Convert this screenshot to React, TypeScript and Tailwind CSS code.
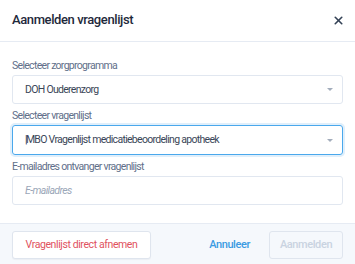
import { X } from "lucide-react";

function Caret() {
  return (
    <svg width="6" height="3" viewBox="0 0 6 3" className="shrink-0">
      <path d="M0 0 L6 0 L3 3 Z" fill="#a3adbc" />
    </svg>
  );
}

export default function App() {
  return (
    <div
      className="w-[355px] h-[264px] bg-white flex flex-col overflow-hidden"
      style={{ fontFamily: "Roboto, sans-serif" }}
    >
      {/* header */}
      <div className="h-[42px] shrink-0 flex items-center justify-between pl-3 pr-[10px] border-b border-[#e6ebf3]">
        <h2 className="text-[13px] font-medium text-[#1e293b] tracking-[-0.4px] -mt-[1px]">Aanmelden vragenlijst</h2>
        <X size={13} strokeWidth={3} className="text-[#334155]" />
      </div>

      {/* body */}
      <div className="flex-1 flex flex-col px-3 pt-[17px]">
        <label className="text-[10.5px] leading-[14px] tracking-[-0.7px] text-[#5f6f8a]">Selecteer zorgprogramma</label>
        <div className="mt-[2px] h-[29px] flex items-center justify-between pl-[12px] pr-[9px] border border-[#e1e7f0] rounded-[3px]">
          <span className="text-[10.5px] tracking-[-0.7px] text-[#3a4658]">DOH Ouderenzorg</span>
          <Caret />
        </div>

        <label className="mt-[5px] text-[10.5px] leading-[14px] tracking-[-0.7px] text-[#5f6f8a]">Selecteer vragenlijst</label>
        <div className="mt-[2px] h-[30px] flex items-center justify-between pl-[12px] pr-[9px] border border-[#4aa8ec] rounded-[3px] shadow-[0_0_0_2px_#e0effb]">
          <span className="text-[10.5px] tracking-[-0.7px] text-[#3a4658]">
            <span className="text-[#1e293b] mr-[-1px]">|</span>MBO Vragenlijst medicatiebeoordeling apotheek
          </span>
          <Caret />
        </div>

        <label className="mt-[5px] text-[10.5px] leading-[14px] tracking-[-0.7px] text-[#5f6f8a]">E-mailadres ontvanger vragenlijst</label>
        <div className="mt-[2px] h-[29px] flex items-center pl-[12px] border border-[#e1e7f0] rounded-[3px]">
          <span className="text-[10.5px] tracking-[-0.6px] italic text-[#9ba7b8]">E-mailadres</span>
        </div>
      </div>

      {/* footer */}
      <div className="h-[41px] shrink-0 flex items-start pt-[7px] px-3 bg-[#f5f8fc] border-t border-[#e6ebf3]">
        <button className="h-[28px] w-[139px] bg-white border border-[#dfe5ee] rounded-[3px] text-[10.5px] tracking-[-0.4px] text-[#e0525e] shadow-[0_1px_1px_rgba(15,23,42,0.04)]">
          Vragenlijst direct afnemen
        </button>
        <div className="flex-1" />
        <button className="h-[28px] px-0 text-[11px] font-medium tracking-[-0.4px] text-[#3b9be2] mr-[19px]">Annuleer</button>
        <button className="h-[28px] w-[74px] border border-[#dfe5ee] rounded-[3px] text-[11px] font-medium tracking-[-0.4px] text-[#c9d3e1]">
          Aanmelden
        </button>
      </div>
    </div>
  );
}
